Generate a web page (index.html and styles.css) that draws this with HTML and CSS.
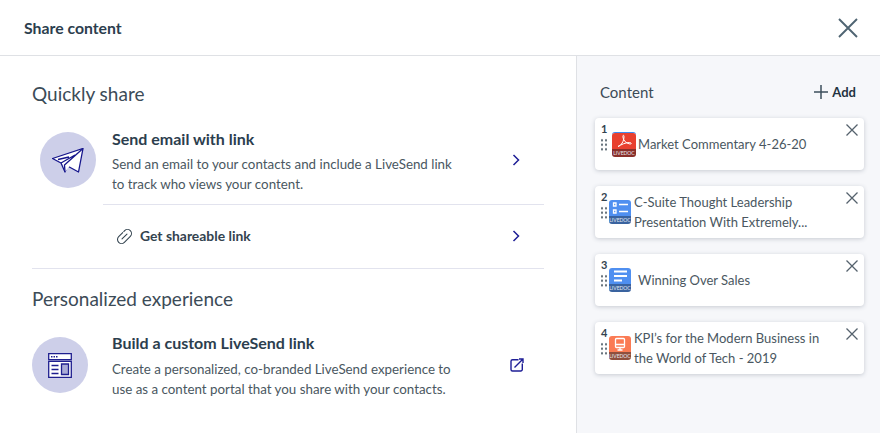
FILE: index.html
```html
<!DOCTYPE html>
<html lang="en">
<head>
<meta charset="utf-8">
<title>Share content</title>
<link rel="stylesheet" href="styles.css">
</head>
<body>
<div class="modal">
  <header class="topbar">
    <h1 class="title">Share content</h1>
    <svg class="close-main" viewBox="0 0 20 20"><path d="M1 1l18 18M19 1L1 19"/></svg>
  </header>
  <div class="body">
    <main class="left">
      <h2 class="section">Quickly share</h2>
      <div class="option option-email">
        <div class="circle">
          <svg class="plane" viewBox="0 0 32 25"><path d="M31 .5L.5 10.500 9 15 13 24 15.500 18 26.500 24z"/><path d="M31 .5L12.500 17 13 24M9 15L23 7M6 11.500L17 9"/></svg>
        </div>
        <div class="copy">
          <h3 class="opt-title">Send email with link</h3>
          <p class="opt-desc">Send an email to your contacts and include a LiveSend link<br>to track who views your content.</p>
        </div>
        <svg class="chev" viewBox="0 0 8 12"><path d="M1.500 1l5 5-5 5"/></svg>
      </div>
      <div class="link-row">
        <svg class="clip" viewBox="0 0 24 24"><path d="M9.500 6.500L3.800 12.200a5.500 5.500 0 0 0 8 8l8.400-8.400a5.500 5.500 0 0 0-8-8L11 5"/><path d="M8.500 15.500l7-7"/></svg>
        <span class="link-text">Get shareable link</span>
        <svg class="chev" viewBox="0 0 8 12"><path d="M1.500 1l5 5-5 5"/></svg>
      </div>
      <h2 class="section section-two">Personalized experience</h2>
      <div class="option option-build">
        <div class="circle">
          <svg class="browser" viewBox="0 0 24 25"><path d="M.7.700h22.600v6H.7zM.7 8.300h22.600v16H.7z"/><path class="fill" d="M13.500 11h7v10.500h-7z"/><path d="M3.500 12.500h7M3.500 16.500h7M3.500 20.500h7"/><path class="dash" d="M3 3.700h7"/></svg>
        </div>
        <div class="copy copy-build">
          <h3 class="opt-title">Build a custom LiveSend link</h3>
          <p class="opt-desc desc-build">Create a personalized, co-branded LiveSend experience to<br>use as a content portal that you share with your contacts.</p>
        </div>
        <svg class="ext" viewBox="0 0 14 14"><path d="M8.500 1.700H2.500a1.500 1.500 0 0 0-1.500 1.500v8.300A1.500 1.500 0 0 0 2.500 13h8.300a1.500 1.500 0 0 0 1.500-1.500V5.500M4.500 9.500L12.500 1.500M9 1h4v4"/></svg>
      </div>
    </main>
    <aside class="right">
      <div class="right-head">
        <span class="content-label">Content</span>
        <span class="add"><svg class="plus" viewBox="0 0 14 14"><path d="M7 0v14M0 7h14"/></svg>Add</span>
      </div>
      <div class="cards">
        <article class="card card-one">
          <span class="num">1</span>
          <span class="dots"></span>
          <span class="doc doc-pdf">
            <span class="doc-art"><svg class="thin-art" viewBox="0 0 24 16"><path d="M6 13.500c3-1 6-5 6-10 0-2-1.500-1.500-1 1 .5 3 3 6 7 6.500 2 .2 1.500-1.500-.5-1.500-4 0-8 2-11.500 4z"/></svg></span>
            <span class="doc-foot">LIVEDOC</span>
          </span>
          <p class="card-text">Market Commentary 4-26-20</p>
          <svg class="close-card" viewBox="0 0 12 12"><path d="M.5.500l11 11M11.500.500l-11 11"/></svg>
        </article>
        <article class="card card-two">
          <span class="num">2</span>
          <span class="dots"></span>
          <span class="doc doc-blue">
            <span class="doc-art"><svg viewBox="0 0 22 16"><path d="M4.500 3h2.500v3H4.500zM4.500 10h2.500v3H4.500zM10 4.500h9M10 11.500h9"/></svg></span>
            <span class="doc-foot">LIVEDOC</span>
          </span>
          <p class="card-text">C-Suite Thought Leadership<br>Presentation With Extremely...</p>
          <svg class="close-card" viewBox="0 0 12 12"><path d="M.5.500l11 11M11.500.500l-11 11"/></svg>
        </article>
        <article class="card card-three">
          <span class="num">3</span>
          <span class="dots"></span>
          <span class="doc doc-blue">
            <span class="doc-art"><svg class="bold-art" viewBox="0 0 22 16"><path d="M5 3.500h13M5 8h13M5 12.500h8"/></svg></span>
            <span class="doc-foot">LIVEDOC</span>
          </span>
          <p class="card-text">Winning Over Sales</p>
          <svg class="close-card" viewBox="0 0 12 12"><path d="M.5.500l11 11M11.500.500l-11 11"/></svg>
        </article>
        <article class="card card-four">
          <span class="num">4</span>
          <span class="dots"></span>
          <span class="doc doc-orange">
            <span class="doc-art"><svg viewBox="0 0 22 16"><path d="M7.500 2.500h7a1 1 0 0 1 1 1v7a1 1 0 0 1-1 1h-7a1 1 0 0 1-1-1v-7a1 1 0 0 1 1-1zM6.500 8.500h9M11 11.500v2.500M8.500 14h5"/></svg></span>
            <span class="doc-foot">LIVEDOC</span>
          </span>
          <p class="card-text">KPI’s for the Modern Business in<br>the World of Tech - 2019</p>
          <svg class="close-card" viewBox="0 0 12 12"><path d="M.5.500l11 11M11.500.500l-11 11"/></svg>
        </article>
      </div>
    </aside>
  </div>
</div>
</body>
</html>
```
FILE: styles.css
```css
* { box-sizing: border-box; }
html, body { margin: 0; padding: 0; }
body {
  width: 880px;
  height: 433px;
  overflow: hidden;
  background: #fff;
  font-family: "Lato", "Noto Sans", sans-serif;
  color: #4a5761;
}
h1, h2, h3, p { margin: 0; font-weight: 400; }
.modal { display: flex; flex-direction: column; height: 433px; }
.topbar {
  height: 56px;
  flex: none;
  display: flex;
  align-items: center;
  justify-content: space-between;
  padding: 0 22px 0 24px;
  border-bottom: 1px solid #dfe1e5;
}
.title { font-size: 15.800px; font-weight: 700; color: #2c3e4e; }
.close-main { width: 20px; height: 20px; fill: none; stroke: #4f6472; stroke-width: 1.900; }
.body { flex: 1; display: flex; min-height: 0; }
.left {
  width: 577px;
  flex: none;
  padding: 25px 32px 0;
  border-right: 1px solid #dfe1e5;
}
.section { font-size: 19px; line-height: 25px; color: #3c4b57; }
.option { display: flex; align-items: flex-start; }
.option-email { margin-top: 26px; padding-left: 8px; height: 72px; }
.circle {
  width: 56px;
  height: 56px;
  flex: none;
  border-radius: 50%;
  background: #cdcfe9;
  display: flex;
  align-items: center;
  justify-content: center;
}
.plane { width: 32px; height: 25px; fill: #fff; stroke: #15158c; stroke-width: 1.300; stroke-linejoin: round; }
.browser { width: 24px; height: 25px; fill: #fff; stroke: #1f1f8f; stroke-width: 1.300; }
.browser .fill { fill: #a9abd6; }
.browser .dash { fill: none; stroke-dasharray: 1.500 1; stroke-width: 1.600; }
.copy { margin-left: 16px; margin-top: -2px; width: 400px; }
.opt-title { font-size: 16px; line-height: 18px; font-weight: 700; color: #2c3e4e; }
.opt-desc { font-size: 13.350px; line-height: 20px; margin-top: 6px; color: #4a5761; }
.chev { width: 8px; height: 12px; flex: none; fill: none; stroke: #1e1e96; stroke-width: 1.500; }
.option-email .chev { margin-top: 22px; }
.link-row {
  margin-left: 71px;
  height: 64px;
  border-top: 1px solid #e2e3ee;
  display: flex;
  align-items: center;
  padding: 0 0 1px 13px;
}
.clip { width: 17px; height: 17px; flex: none; fill: none; stroke: #33434f; stroke-width: 1.500; stroke-linecap: round; stroke-linejoin: round; }
.link-text { font-size: 13.900px; font-weight: 700; color: #33434f; margin: 0 0 2px 7px; width: 372px; }
.section-two { border-top: 1px solid #e2e3ee; padding-top: 17px; height: 51px; line-height: 25px; }
.option-build { margin-top: 18px; }
.copy-build { margin-left: 24px; margin-top: -3px; width: 398px; }
.desc-build { margin-top: 7px; }
.ext { width: 14px; height: 14px; flex: none; fill: none; stroke: #1e1e96; stroke-width: 1.400; margin-top: 21px; }
.right {
  flex: 1;
  background: #f6f7fa;
  padding: 27px 16px 0 18px;
}
.right-head {
  display: flex;
  align-items: center;
  justify-content: space-between;
  height: 18px;
  padding: 0 8px 0 5px;
}
.content-label { font-size: 15px; color: #3c4b57; }
.add { display: flex; align-items: center; font-size: 13px; font-weight: 700; color: #22323f; }
.plus { width: 14px; height: 14px; margin-right: 4px; fill: none; stroke: #3c4f5c; stroke-width: 1.500; }
.cards { display: flex; flex-direction: column; gap: 16px; margin-top: 17px; }
.card {
  position: relative;
  height: 52px;
  background: #fff;
  border-radius: 4px;
  box-shadow: 0 1px 4px rgba(60, 70, 90, .25);
  display: flex;
  align-items: flex-start;
  padding-left: 5px;
}
.num {
  position: absolute;
  left: 6px;
  top: 5px;
  font-size: 11px;
  line-height: 12px;
  font-weight: 700;
  color: #33434f;
}
.dots {
  flex: none;
  width: 8px;
  height: 13.500px;
  margin-top: 20px;
  background-image: radial-gradient(circle, #55626d 0.900px, transparent 1.200px);
  background-size: 4px 4.500px;
}
.doc {
  flex: none;
  width: 22px;
  height: 24px;
  margin-left: 1px;
  margin-top: 14px;
  border-radius: 3px;
  overflow: hidden;
  display: flex;
  flex-direction: column;
}
.doc-art { flex: 1; display: block; min-height: 0; }
.doc-art svg { display: block; width: 100%; height: 100%; fill: none; stroke: #fff; stroke-width: 1.300; }
.doc-art .bold-art { stroke-width: 2; }
.doc-art .thin-art { stroke-width: 1; }
.doc-foot {
  flex: none;
  height: 8px;
  font-family: "Lato", sans-serif;
  font-size: 5px;
  line-height: 8px;
  text-align: center;
  color: #e8ecf4;
  white-space: nowrap;
}
.doc-pdf { width: 24px; margin-left: 4px; margin-top: 15px; box-shadow: 0 -1px 0 #3d8bf0; }
.doc-pdf .doc-art { background: #e8402f; }
.doc-pdf .doc-foot { background: #8a2f2a; }
.doc-blue .doc-art { background: #4f8ff0; }
.doc-blue .doc-foot { background: #3a639f; }
.doc-orange .doc-art { background: #fb7b54; }
.doc-orange .doc-foot { background: #8f4f3e; }
.card-text {
  margin-left: 3px;
  font-size: 13px;
  line-height: 20px;
  color: #4a5761;
  padding-top: 6px;
  white-space: nowrap;
}
.card-one .card-text { margin-left: 2px; padding-top: 16px; }
.card-three .card-text { margin-left: 7px; padding-top: 16px; }
.close-card {
  position: absolute;
  right: 6px;
  top: 6px;
  width: 12px;
  height: 12px;
  fill: none;
  stroke: #55626d;
  stroke-width: 1.300;
}
```
